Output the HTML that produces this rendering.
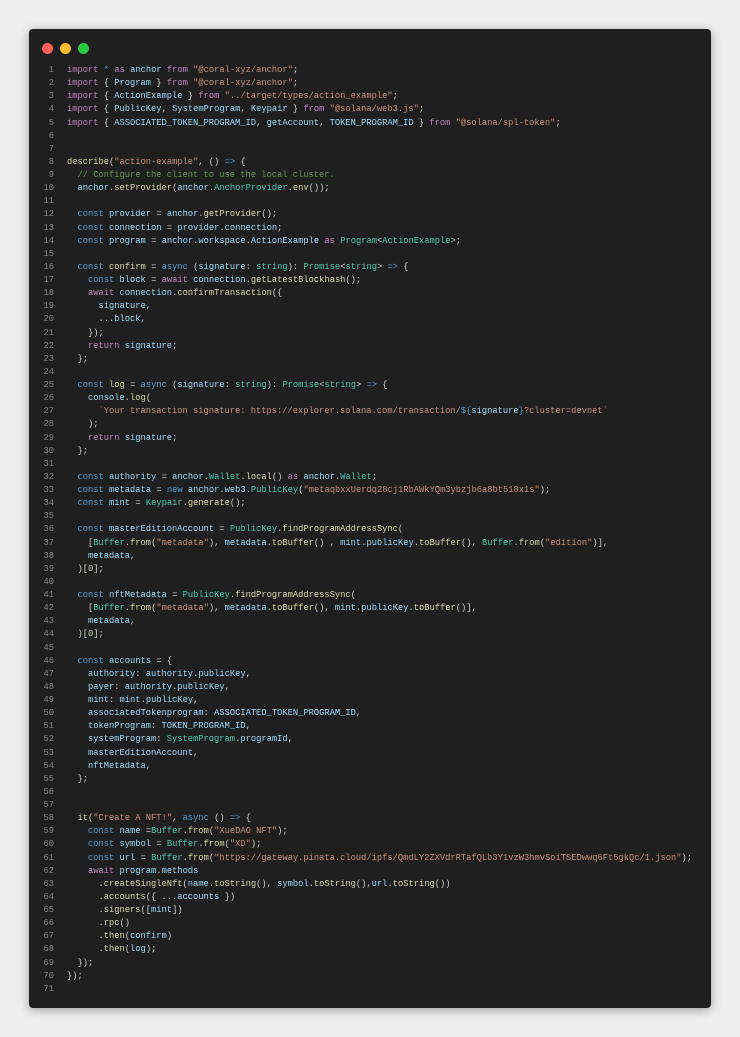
<!DOCTYPE html>
<html><head><meta charset="utf-8"><style>
html,body{margin:0;padding:0;width:740px;height:1037px;background:#eeeeee;overflow:hidden}
.win{position:absolute;left:29px;top:29px;width:682px;height:979px;background:#1f1f1f;border-radius:4px;box-shadow:0 2px 10px rgba(0,0,0,.35)}
.dot{position:absolute;top:14px;width:11px;height:11px;border-radius:50%}
pre{position:absolute;left:0;top:35px;margin:0;font-family:"Liberation Mono",monospace;font-size:8.75px;line-height:13.13px;color:#d4d4d4;white-space:pre}
.ln{display:inline-block;width:25px;text-align:right;color:#858585;margin-right:13px}
.k{color:#c586c0}.b{color:#569cd6}.v{color:#9cdcfe}.f{color:#dcdcaa}.t{color:#4ec9b0}.s{color:#ce9178}.c{color:#6a9955}.n{color:#b5cea8}
</style></head><body>
<div class="win">
<div class="dot" style="left:13px;background:#ff5f57"></div>
<div class="dot" style="left:31px;background:#febc2e"></div>
<div class="dot" style="left:49px;background:#28c840"></div>
<pre><span class="ln">1</span><span class="k">import</span> <span class="b">*</span> <span class="k">as</span> <span class="v">anchor</span> <span class="k">from</span> <span class="s">"@coral-xyz/anchor"</span>;
<span class="ln">2</span><span class="k">import</span> { <span class="v">Program</span> } <span class="k">from</span> <span class="s">"@coral-xyz/anchor"</span>;
<span class="ln">3</span><span class="k">import</span> { <span class="v">ActionExample</span> } <span class="k">from</span> <span class="s">"../target/types/action_example"</span>;
<span class="ln">4</span><span class="k">import</span> { <span class="v">PublicKey</span>, <span class="v">SystemProgram</span>, <span class="v">Keypair</span> } <span class="k">from</span> <span class="s">"@solana/web3.js"</span>;
<span class="ln">5</span><span class="k">import</span> { <span class="v">ASSOCIATED_TOKEN_PROGRAM_ID</span>, <span class="v">getAccount</span>, <span class="v">TOKEN_PROGRAM_ID</span> } <span class="k">from</span> <span class="s">"@solana/spl-token"</span>;
<span class="ln">6</span>
<span class="ln">7</span>
<span class="ln">8</span><span class="f">describe</span>(<span class="s">"action-example"</span>, () <span class="b">=&gt;</span> {
<span class="ln">9</span>  <span class="c">// Configure the client to use the local cluster.</span>
<span class="ln">10</span>  <span class="v">anchor</span>.<span class="f">setProvider</span>(<span class="v">anchor</span>.<span class="t">AnchorProvider</span>.<span class="f">env</span>());
<span class="ln">11</span>
<span class="ln">12</span>  <span class="b">const</span> <span class="v">provider</span> = <span class="v">anchor</span>.<span class="f">getProvider</span>();
<span class="ln">13</span>  <span class="b">const</span> <span class="v">connection</span> = <span class="v">provider</span>.<span class="v">connection</span>;
<span class="ln">14</span>  <span class="b">const</span> <span class="v">program</span> = <span class="v">anchor</span>.<span class="v">workspace</span>.<span class="v">ActionExample</span> <span class="k">as</span> <span class="t">Program</span>&lt;<span class="t">ActionExample</span>&gt;;
<span class="ln">15</span>
<span class="ln">16</span>  <span class="b">const</span> <span class="f">confirm</span> = <span class="b">async</span> (<span class="v">signature</span>: <span class="t">string</span>): <span class="t">Promise</span>&lt;<span class="t">string</span>&gt; <span class="b">=&gt;</span> {
<span class="ln">17</span>    <span class="b">const</span> <span class="v">block</span> = <span class="k">await</span> <span class="v">connection</span>.<span class="f">getLatestBlockhash</span>();
<span class="ln">18</span>    <span class="k">await</span> <span class="v">connection</span>.<span class="f">confirmTransaction</span>({
<span class="ln">19</span>      <span class="v">signature</span>,
<span class="ln">20</span>      ...<span class="v">block</span>,
<span class="ln">21</span>    });
<span class="ln">22</span>    <span class="k">return</span> <span class="v">signature</span>;
<span class="ln">23</span>  };
<span class="ln">24</span>
<span class="ln">25</span>  <span class="b">const</span> <span class="f">log</span> = <span class="b">async</span> (<span class="v">signature</span>: <span class="t">string</span>): <span class="t">Promise</span>&lt;<span class="t">string</span>&gt; <span class="b">=&gt;</span> {
<span class="ln">26</span>    <span class="v">console</span>.<span class="f">log</span>(
<span class="ln">27</span>      <span class="s">`Your transaction signature: https://explorer.solana.com/transaction/</span><span class="b">${</span><span class="v">signature</span><span class="b">}</span><span class="s">?cluster=devnet`</span>
<span class="ln">28</span>    );
<span class="ln">29</span>    <span class="k">return</span> <span class="v">signature</span>;
<span class="ln">30</span>  };
<span class="ln">31</span>
<span class="ln">32</span>  <span class="b">const</span> <span class="v">authority</span> = <span class="v">anchor</span>.<span class="t">Wallet</span>.<span class="f">local</span>() <span class="k">as</span> <span class="v">anchor</span>.<span class="t">Wallet</span>;
<span class="ln">33</span>  <span class="b">const</span> <span class="v">metadata</span> = <span class="b">new</span> <span class="v">anchor</span>.<span class="v">web3</span>.<span class="t">PublicKey</span>(<span class="s">"metaqbxxUerdq28cj1RbAWkYQm3ybzjb6a8bt518x1s"</span>);
<span class="ln">34</span>  <span class="b">const</span> <span class="v">mint</span> = <span class="t">Keypair</span>.<span class="f">generate</span>();
<span class="ln">35</span>
<span class="ln">36</span>  <span class="b">const</span> <span class="v">masterEditionAccount</span> = <span class="t">PublicKey</span>.<span class="f">findProgramAddressSync</span>(
<span class="ln">37</span>    [<span class="t">Buffer</span>.<span class="f">from</span>(<span class="s">"metadata"</span>), <span class="v">metadata</span>.<span class="f">toBuffer</span>() , <span class="v">mint</span>.<span class="v">publicKey</span>.<span class="f">toBuffer</span>(), <span class="t">Buffer</span>.<span class="f">from</span>(<span class="s">"edition"</span>)],
<span class="ln">38</span>    <span class="v">metadata</span>,
<span class="ln">39</span>  )[<span class="n">0</span>];
<span class="ln">40</span>
<span class="ln">41</span>  <span class="b">const</span> <span class="v">nftMetadata</span> = <span class="t">PublicKey</span>.<span class="f">findProgramAddressSync</span>(
<span class="ln">42</span>    [<span class="t">Buffer</span>.<span class="f">from</span>(<span class="s">"metadata"</span>), <span class="v">metadata</span>.<span class="f">toBuffer</span>(), <span class="v">mint</span>.<span class="v">publicKey</span>.<span class="f">toBuffer</span>()],
<span class="ln">43</span>    <span class="v">metadata</span>,
<span class="ln">44</span>  )[<span class="n">0</span>];
<span class="ln">45</span>
<span class="ln">46</span>  <span class="b">const</span> <span class="v">accounts</span> = {
<span class="ln">47</span>    <span class="v">authority</span>: <span class="v">authority</span>.<span class="v">publicKey</span>,
<span class="ln">48</span>    <span class="v">payer</span>: <span class="v">authority</span>.<span class="v">publicKey</span>,
<span class="ln">49</span>    <span class="v">mint</span>: <span class="v">mint</span>.<span class="v">publicKey</span>,
<span class="ln">50</span>    <span class="v">associatedTokenprogram</span>: <span class="v">ASSOCIATED_TOKEN_PROGRAM_ID</span>,
<span class="ln">51</span>    <span class="v">tokenProgram</span>: <span class="v">TOKEN_PROGRAM_ID</span>,
<span class="ln">52</span>    <span class="v">systemProgram</span>: <span class="t">SystemProgram</span>.<span class="v">programId</span>,
<span class="ln">53</span>    <span class="v">masterEditionAccount</span>,
<span class="ln">54</span>    <span class="v">nftMetadata</span>,
<span class="ln">55</span>  };
<span class="ln">56</span>
<span class="ln">57</span>
<span class="ln">58</span>  <span class="f">it</span>(<span class="s">"Create A NFT!"</span>, <span class="b">async</span> () <span class="b">=&gt;</span> {
<span class="ln">59</span>    <span class="b">const</span> <span class="v">name</span> =<span class="t">Buffer</span>.<span class="f">from</span>(<span class="s">"XueDAO NFT"</span>);
<span class="ln">60</span>    <span class="b">const</span> <span class="v">symbol</span> = <span class="t">Buffer</span>.<span class="f">from</span>(<span class="s">"XD"</span>);
<span class="ln">61</span>    <span class="b">const</span> <span class="v">url</span> = <span class="t">Buffer</span>.<span class="f">from</span>(<span class="s">"https://gateway.pinata.cloud/ipfs/QmdLY2ZXVdrRTafQLb3Y1vzW3hmvSoiTSEDwwq6Ft5gkQc/1.json"</span>);
<span class="ln">62</span>    <span class="k">await</span> <span class="v">program</span>.<span class="v">methods</span>
<span class="ln">63</span>      .<span class="f">createSingleNft</span>(<span class="v">name</span>.<span class="f">toString</span>(), <span class="v">symbol</span>.<span class="f">toString</span>(),<span class="v">url</span>.<span class="f">toString</span>())
<span class="ln">64</span>      .<span class="f">accounts</span>({ ...<span class="v">accounts</span> })
<span class="ln">65</span>      .<span class="f">signers</span>([<span class="v">mint</span>])
<span class="ln">66</span>      .<span class="f">rpc</span>()
<span class="ln">67</span>      .<span class="f">then</span>(<span class="v">confirm</span>)
<span class="ln">68</span>      .<span class="f">then</span>(<span class="v">log</span>);
<span class="ln">69</span>  });
<span class="ln">70</span>});
<span class="ln">71</span>
</pre>
</div>
</body></html>
